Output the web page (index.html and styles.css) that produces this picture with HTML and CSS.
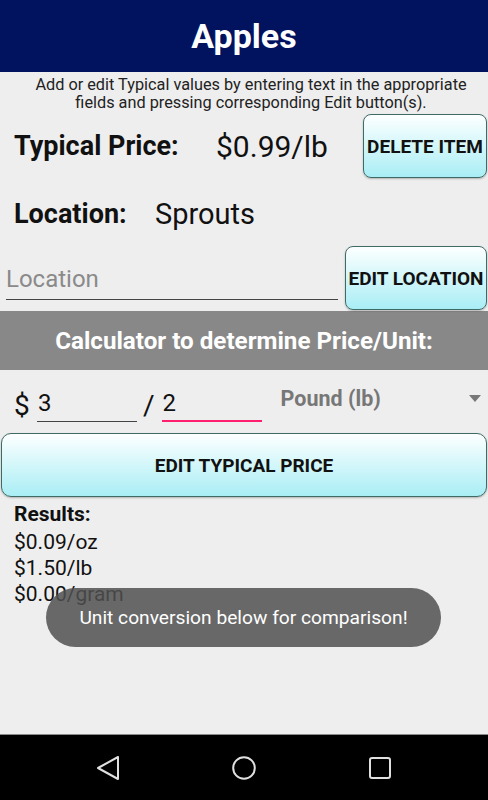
FILE: index.html
```html
<!DOCTYPE html>
<html lang="en">
<head>
    <meta charset="UTF-8">
    <meta name="viewport" content="width=device-width, initial-scale=1.0">
    <title>Apples</title>
    <link rel="stylesheet" href="styles.css">
</head>
<body>
    <div class="screen">
        <header class="title-bar">Apples</header>

        <main class="content">
            <p class="hint">Add or edit Typical values by entering text in the appropriate<br>fields and pressing corresponding Edit button(s).</p>

            <div class="info-row price-row">
                <span class="label price-label">Typical Price:</span>
                <span class="value price-value">$0.99/lb</span>
                <button type="button" class="edit-btn side-btn">DELETE ITEM</button>
            </div>

            <div class="info-row location-row">
                <span class="label location-label">Location:</span>
                <span class="value">Sprouts</span>
            </div>

            <div class="edit-row">
                <input type="text" class="line-input location-input" placeholder="Location">
                <button type="button" class="edit-btn side-btn">EDIT LOCATION</button>
            </div>

            <div class="band">Calculator to determine Price/Unit:</div>

            <div class="calc-row">
                <span class="sign">$</span>
                <input type="text" class="line-input amount-input" value="3">
                <span class="slash">/</span>
                <input type="text" class="line-input amount-input focused" value="2">
                <div class="spinner">
                    <span>Pound (lb)</span>
                    <span class="caret"></span>
                </div>
            </div>

            <button type="button" class="edit-btn wide-btn">EDIT TYPICAL PRICE</button>

            <div class="results">
                <div class="results-title">Results:</div>
                <div class="results-list">
                    <div>$0.09/oz</div>
                    <div>$1.50/lb</div>
                    <div>$0.00/gram</div>
                </div>
            </div>

            <div class="toast">Unit conversion below for comparison!</div>
        </main>

        <nav class="nav-bar">
            <svg class="nav-icon" viewBox="0 0 24 24"><polygon points="2,12 22,1 22,23"/></svg>
            <svg class="nav-icon" viewBox="0 0 24 24"><circle cx="12" cy="12" r="10.8"/></svg>
            <svg class="nav-icon" viewBox="0 0 24 24"><rect x="2" y="2" width="20" height="20" rx="2"/></svg>
        </nav>
    </div>
</body>
</html>
```

FILE: styles.css
```css
body {
    margin: 0;
    font-family: 'Roboto', 'Liberation Sans', sans-serif;
    color: #111111;
    background-color: #eeeeee;
}

.screen {
    display: flex;
    flex-direction: column;
    height: 800px;
    overflow: hidden;
}

.title-bar {
    height: 72px;
    display: flex;
    align-items: center;
    justify-content: center;
    background-color: #01135f;
    color: #ffffff;
    font-size: 34px;
    font-weight: bold;
}

.content {
    flex: 1;
    position: relative;
    background-color: #eeeeee;
}

.hint {
    margin: 0;
    padding: 4px 0 0 14px;
    height: 38px;
    font-size: 16.3px;
    line-height: 18px;
    text-align: center;
    color: #222222;
}

.info-row {
    display: flex;
    align-items: center;
}

.price-row {
    height: 64px;
}

.location-row {
    height: 68px;
    padding-top: 4px;
    box-sizing: border-box;
}

.label {
    margin-left: 14px;
    font-size: 27px;
    font-weight: bold;
}

.price-label {
    width: 202px;
}

.location-label {
    width: 141px;
}

.value {
    font-size: 29px;
}

.price-value {
    font-size: 30px;
}

.edit-btn {
    font-family: 'Roboto', 'Liberation Sans', sans-serif;
    font-weight: bold;
    color: #111111;
    background: linear-gradient(#fdffff, #a9eef5);
    border: 1.5px solid #3f6b67;
    border-radius: 8px;
    padding: 0;
    white-space: nowrap;
    cursor: pointer;
    box-shadow: 0 1px 2px rgba(0, 0, 0, 0.25);
}

.side-btn {
    height: 64px;
    font-size: 19px;
    margin-left: auto;
    margin-right: 1px;
}

.price-row .side-btn {
    width: 124px;
}

.edit-row {
    display: flex;
    align-items: flex-end;
    height: 65px;
}

.edit-row .side-btn {
    width: 142px;
    align-self: flex-start;
}

.line-input {
    font-family: 'Roboto', 'Liberation Sans', sans-serif;
    background: transparent;
    border: none;
    border-bottom: 1px solid #444444;
    outline: none;
    padding: 0;
    color: #111111;
}

.location-input {
    width: 332px;
    height: 41px;
    margin: 0 0 11px 6px;
    font-size: 24px;
}

.location-input::placeholder {
    color: #8a8a8a;
}

.band {
    height: 59px;
    display: flex;
    align-items: center;
    justify-content: center;
    background-color: #888888;
    color: #ffffff;
    font-size: 24.2px;
    font-weight: bold;
}

.calc-row {
    display: flex;
    align-items: flex-end;
    height: 63px;
    padding-bottom: 11px;
    box-sizing: border-box;
}

.sign {
    margin-left: 14px;
    width: 23px;
    font-size: 28px;
    line-height: 32px;
}

.slash {
    margin: 0 7px 0 6px;
    font-size: 28px;
    line-height: 32px;
}

.amount-input {
    width: 100px;
    height: 33px;
    padding: 0 0 4px 1px;
    font-size: 24px;
    border-bottom: 1px solid #444444;
    box-sizing: border-box;
}

.amount-input.focused {
    border-bottom: 2px solid #ff1f6e;
    padding-bottom: 3px;
}

.spinner {
    flex: 1;
    align-self: center;
    display: flex;
    align-items: center;
    justify-content: space-between;
    margin: 5px 7px 0 19px;
    font-size: 21.5px;
    font-weight: bold;
    color: #777777;
}

.caret {
    width: 0;
    height: 0;
    border-left: 6.5px solid transparent;
    border-right: 6.5px solid transparent;
    border-top: 7px solid #777777;
}

.wide-btn {
    display: block;
    width: 486px;
    height: 64px;
    margin: 0 1px;
    font-size: 19px;
    border-radius: 10px;
}

.results {
    padding: 5px 0 0 14px;
}

.results-title {
    font-size: 21px;
    font-weight: bold;
    line-height: 24px;
}

.results-list {
    margin-top: 3px;
    font-size: 21px;
    line-height: 26px;
}

.toast {
    position: absolute;
    left: 46px;
    top: 516px;
    width: 395px;
    height: 59px;
    display: flex;
    align-items: center;
    justify-content: center;
    border-radius: 30px;
    background-color: rgba(80, 80, 80, 0.85);
    color: #ffffff;
    font-size: 19.2px;
}

.nav-bar {
    height: 65px;
    border-top: 1px solid #8a8a8a;
    background-color: #000000;
    display: flex;
    align-items: center;
    justify-content: center;
    gap: 112px;
}

.nav-icon {
    width: 24px;
    height: 24px;
    fill: none;
    stroke: #e0e0e0;
    stroke-width: 2;
    stroke-linejoin: round;
}
```
